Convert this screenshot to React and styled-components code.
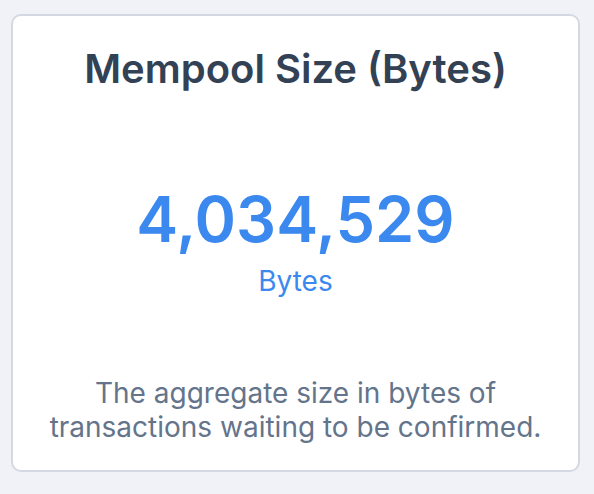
import React from 'react'
import styled, { createGlobalStyle } from 'styled-components'

const GlobalStyle = createGlobalStyle`
    body {
        margin: 0;
        background: #f0f2f7;
        font-family: Inter, "Noto Sans", sans-serif;
    }
`

const Page = styled.div`
    padding: 14px 14px 22px 11px;
`

const Card = styled.div`
    height: 458px;
    box-sizing: border-box;
    background: #ffffff;
    border: 2px solid #d3d8e3;
    border-radius: 10px;
    display: flex;
    flex-direction: column;
    align-items: center;
    text-align: center;
    padding: 29px 16px 0;
`

const Title = styled.h2`
    margin: 0;
    font-size: 40px;
    line-height: 48px;
    font-weight: 600;
    color: #334155;
`

const Value = styled.div`
    margin-top: 90px;
    font-size: 63px;
    line-height: 72px;
    font-weight: 600;
    color: #3b89ef;
`

const Unit = styled.div`
    margin-top: 10px;
    font-size: 28px;
    line-height: 32px;
    color: #3b89ef;
`

const Description = styled.p`
    margin: 79px 0 0;
    font-size: 28px;
    line-height: 34px;
    color: #64748b;
`

export default function App() {
    return (
        <Page>
            <GlobalStyle />
            <Card>
                <Title>Mempool Size (Bytes)</Title>
                <Value>4,034,529</Value>
                <Unit>Bytes</Unit>
                <Description>
                    The aggregate size in bytes of
                    <br />
                    transactions waiting to be confirmed.
                </Description>
            </Card>
        </Page>
    )
}
